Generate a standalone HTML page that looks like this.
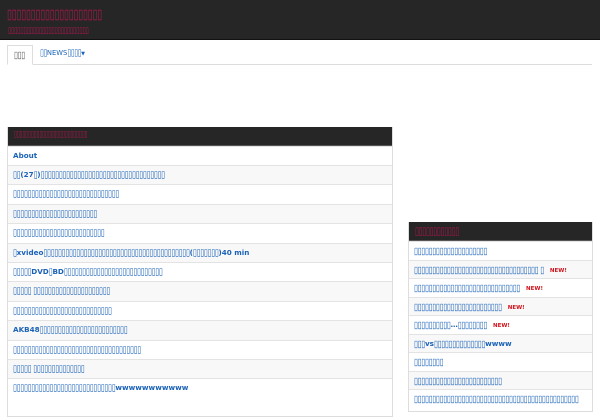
<!DOCTYPE html>
<html><head><meta charset="utf-8"><style>
*{margin:0;padding:0;box-sizing:border-box}
body{width:600px;height:400px;overflow:hidden;background:#fff;font-family:"DejaVu Sans","Liberation Sans",sans-serif;}
.q{font-family:"DejaVu Sans",sans-serif;font-weight:normal;display:inline-block;transform:scaleY(1.35)}
.hd{position:absolute;left:0;top:0;width:600px;height:40px;background:#262626;border-bottom:1px solid #111}
.t1{position:absolute;left:7px;top:8px;color:#b0184f;font-size:9px;letter-spacing:-0.2px;white-space:nowrap;transform:scaleY(1.5);transform-origin:left top}
.t2{position:absolute;left:8px;top:26px;color:#b0184f;font-size:6px;letter-spacing:-0.2px;white-space:nowrap;transform:scaleY(1.4);transform-origin:left top}
.tabs{position:absolute;left:7px;top:45px;width:585px;height:20px;border-bottom:1px solid #ddd}
.tab1{position:absolute;left:0;top:0;width:26px;height:20px;border:1px solid #ddd;border-bottom:1px solid #fff;background:#fff;font-size:7.2px;letter-spacing:-0.3px;color:#555;padding:4px 0 0 6px}
.tab2{position:absolute;left:33px;top:4px;font-size:6.8px;color:#1a62b8;white-space:nowrap}
.panel{position:absolute;border:1px solid #ddd;border-top:none}
.ph{height:19px;background:#262626;color:#b0184f;font-size:5.5px;letter-spacing:-0.2px;padding:5px 0 0 6px;white-space:nowrap;border-bottom:1px solid #555}
.ph span{display:inline-block;transform:scaleY(1.5)}
.r{border-top:1px solid #e3e3e3;font-size:7.2px;font-weight:bold;color:#1a62b8;padding-left:5px;white-space:nowrap;overflow:hidden}
.r .q{letter-spacing:-0.3px}
.new{color:#d0121b;font-size:5.5px;margin-left:6px}
</style></head><body>
<div class="hd"><div class="t1">▯▯▯▯▯▯▯▯▯▯▯▯▯▯▯▯▯▯▯▯</div><div class="t2">▯▯▯▯▯▯▯▯▯▯▯▯▯▯▯▯▯▯▯▯▯▯▯▯▯▯</div></div>
<div class="tabs"><div class="tab1"><span class="q">▯▯▯</span></div><div class="tab2"><span class="q" style="letter-spacing:-0.3px">▯▯</span>NEWS<span class="q" style="letter-spacing:-0.3px">▯▯▯▯</span><span style="font-size:5px">▼</span></div></div>
<div class="panel" style="left:7px;top:127px;width:386px;height:290px">
<div class="ph"><span>▯▯▯▯▯▯▯▯▯▯▯▯▯▯▯▯▯▯▯▯▯▯▯▯▯▯</span></div>
<div class="r" style="height:19px;line-height:18px;background:#fff">About</div>
<div class="r" style="height:19.4px;line-height:18px;background:#f8f8f8"><span class="q">▯▯</span>(27<span class="q">▯</span>)<span class="q">▯▯▯▯▯▯▯▯▯▯▯▯▯▯▯▯▯▯▯▯▯▯▯▯▯▯▯▯▯▯▯▯▯▯</span></div>
<div class="r" style="height:19.4px;line-height:18px;background:#fff"><span class="q">▯▯▯▯▯▯▯▯▯▯▯▯▯▯▯▯▯▯▯▯▯▯▯▯▯▯▯▯▯</span></div>
<div class="r" style="height:19.4px;line-height:18px;background:#f8f8f8"><span class="q">▯▯▯▯▯▯▯▯▯▯▯▯▯▯▯▯▯▯▯▯▯▯▯</span></div>
<div class="r" style="height:19.4px;line-height:18px;background:#fff"><span class="q">▯▯▯▯▯▯▯▯▯▯▯▯▯▯▯▯▯▯▯▯▯▯▯▯▯</span></div>
<div class="r" style="height:19.4px;line-height:18px;background:#f8f8f8"><span class="q">▯</span>xvideo<span class="q">▯▯▯▯▯▯▯▯▯▯▯▯▯▯▯▯▯▯▯▯▯▯▯▯▯▯▯▯▯▯▯▯▯▯▯▯▯▯▯▯</span>(<span class="q">▯▯▯▯▯▯▯</span>)40 min</div>
<div class="r" style="height:19.4px;line-height:18px;background:#fff"><span class="q">▯▯▯▯▯</span>DVD<span class="q">▯</span>BD<span class="q">▯▯▯▯▯▯▯▯▯▯▯▯▯▯▯▯▯▯▯▯▯▯▯▯▯▯▯</span></div>
<div class="r" style="height:19.4px;line-height:18px;background:#f8f8f8"><span class="q">▯▯▯▯▯ ▯▯▯▯▯▯▯▯▯▯▯▯▯▯▯▯▯▯▯▯▯</span></div>
<div class="r" style="height:19.4px;line-height:18px;background:#fff"><span class="q">▯▯▯▯▯▯▯▯▯▯▯▯▯▯▯▯▯▯▯▯▯▯▯▯▯▯▯</span></div>
<div class="r" style="height:19.4px;line-height:18px;background:#f8f8f8">AKB48<span class="q">▯▯▯▯▯▯▯▯▯▯▯▯▯▯▯▯▯▯▯▯▯▯▯▯</span></div>
<div class="r" style="height:19.4px;line-height:18px;background:#fff"><span class="q">▯▯▯▯▯▯▯▯▯▯▯▯▯▯▯▯▯▯▯▯▯▯▯▯▯▯▯▯▯▯▯▯▯▯▯</span></div>
<div class="r" style="height:19.4px;line-height:18px;background:#f8f8f8"><span class="q">▯▯▯▯▯ ▯▯▯▯▯▯▯▯▯▯▯▯▯▯</span></div>
<div class="r" style="height:19.4px;line-height:18px;background:#fff"><span class="q">▯▯▯▯▯▯▯▯▯▯▯▯▯▯▯▯▯▯▯▯▯▯▯▯▯▯▯▯</span>wwwwwwwwwww</div>
</div>
<div class="panel" style="left:408px;top:222px;width:185px;height:190px">
<div class="ph" style="font-size:7.2px;letter-spacing:-0.3px;padding-top:4px"><span>▯▯▯▯▯▯▯▯▯▯▯▯</span></div>
<div class="r" style="height:18.5px;line-height:17px;background:#fff"><span class="q">▯▯▯▯▯▯▯▯▯▯▯▯▯▯▯▯▯▯▯▯</span></div>
<div class="r" style="height:18.5px;line-height:17px;background:#f8f8f8"><span class="q">▯▯▯▯▯▯▯▯▯▯▯▯▯▯▯▯▯▯▯▯▯▯▯▯▯▯▯▯▯▯▯▯▯▯ ▯</span><span class="new">NEW!</span></div>
<div class="r" style="height:18.5px;line-height:17px;background:#fff"><span class="q">▯▯▯▯▯▯▯▯▯▯▯▯▯▯▯▯▯▯▯▯▯▯▯▯▯▯▯▯▯</span><span class="new">NEW!</span></div>
<div class="r" style="height:18.5px;line-height:17px;background:#f8f8f8"><span class="q">▯▯▯▯▯▯▯▯▯▯▯▯▯▯▯▯▯▯▯▯▯▯▯▯</span><span class="new">NEW!</span></div>
<div class="r" style="height:18.5px;line-height:17px;background:#fff"><span class="q">▯▯▯▯▯▯▯▯▯▯</span>…<span class="q">▯▯▯▯▯▯▯▯</span><span class="new">NEW!</span></div>
<div class="r" style="height:18.5px;line-height:17px;background:#f8f8f8"><span class="q">▯▯▯</span>vs<span class="q">▯▯▯▯▯▯▯▯▯▯▯▯▯▯</span>wwww</div>
<div class="r" style="height:18.5px;line-height:17px;background:#fff"><span class="q">▯▯▯▯▯▯▯▯</span></div>
<div class="r" style="height:18.5px;line-height:17px;background:#f8f8f8"><span class="q">▯▯▯▯▯▯▯▯▯▯▯▯▯▯▯▯▯▯▯▯▯▯▯▯</span></div>
<div class="r" style="height:18.5px;line-height:17px;background:#fff"><span class="q">▯▯▯▯▯▯▯▯▯▯▯▯▯▯▯▯▯▯▯▯▯▯▯▯▯▯▯▯▯▯▯▯▯▯▯▯▯▯▯▯▯▯▯▯▯</span></div>
</div>
</body></html>
